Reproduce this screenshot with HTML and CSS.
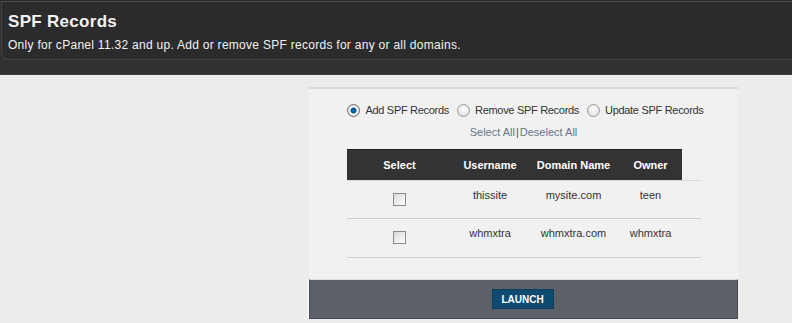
FILE: index.html
```html
<!DOCTYPE html>
<html lang="en">

<head>
  <meta charset="UTF-8" />
  <title>SPF Records</title>
  <link rel="stylesheet" href="styles.css">
</head>

<body>
  <div class="masthead">
    <div class="masthead-box">
      <h1>SPF Records</h1>
      <p>Only for cPanel 11.32 and up. Add or remove SPF records for any or all domains.</p>
    </div>
    <div class="masthead-strip"></div>
  </div>

  <div class="panel">
    <form id="spf-form">
      <div class="modes">
        <label><input type="radio" name="mode" value="add" checked /> Add SPF Records</label>
        <label><input type="radio" name="mode" value="remove" /> Remove SPF Records</label>
        <label><input type="radio" name="mode" value="update" /> Update SPF Records</label>
      </div>

      <div class="select-links">
        <a href="#" id="select-all">Select All</a><span class="sep">|</span><a href="#" id="deselect-all">Deselect All</a>
      </div>

      <table class="accounts">
        <thead>
          <tr>
            <th class="col-select">Select</th>
            <th class="col-user">Username</th>
            <th class="col-domain">Domain Name</th>
            <th class="col-owner">Owner</th>
            <th class="col-pad"></th>
          </tr>
        </thead>
        <tbody>
          <tr>
            <td><input type="checkbox" name="acct" value="thissite" /></td>
            <td>thissite</td>
            <td>mysite.com</td>
            <td>teen</td>
            <td></td>
          </tr>
          <tr>
            <td><input type="checkbox" name="acct" value="whmxtra" /></td>
            <td>whmxtra</td>
            <td>whmxtra.com</td>
            <td>whmxtra</td>
            <td></td>
          </tr>
        </tbody>
      </table>

      <div class="panel-footer">
        <button type="submit">LAUNCH</button>
      </div>
    </form>
  </div>
</body>

</html>
```

FILE: styles.css
```css
html,
body {
  margin: 0;
  padding: 0;
}

body {
  font-family: "Liberation Sans", Arial, sans-serif;
  background-color: #ececec;
  color: #333;
}

/* header */
.masthead {
  background: #313131;
  border-top: 1px solid #262626;
}

.masthead-box {
  background: #2b2b2b;
  border-top: 1px solid #4e4e4e;
  border-left: 1px solid #404040;
  border-bottom: 1px solid #444;
  border-radius: 0 0 0 8px;
  margin-left: 1px;
  height: 59px;
  padding: 0 6px;
  box-sizing: border-box;
  color: #f2f2f2;
}

.masthead-box h1 {
  margin: 0;
  padding-top: 10px;
  font-size: 17px;
  line-height: 20px;
  font-weight: bold;
  letter-spacing: 0.3px;
}

.masthead-box p {
  margin: 6px 0 0;
  font-size: 12px;
  line-height: 14px;
  letter-spacing: 0.28px;
}

.masthead-strip {
  height: 14px;
  border-bottom: 1px solid #3e3e3e;
}

/* main panel */
.panel {
  margin: 12px 0 0 309px;
  width: 429px;
  background: #f1f1f1;
  border-top: 2px solid #dadada;
}

.modes {
  display: flex;
  justify-content: center;
  gap: 8px;
  padding-top: 13px;
  padding-left: 4px;
  font-size: 11px;
  line-height: 16px;
  letter-spacing: -0.3px;
  color: #333;
}

.modes label {
  display: flex;
  align-items: center;
  gap: 5px;
}

.modes input {
  appearance: none;
  width: 13px;
  height: 13px;
  margin: 0;
  border: 1px solid #9a9a9a;
  border-radius: 50%;
  background: radial-gradient(circle at 50% 40%, #ffffff, #d6d6d6);
  box-sizing: border-box;
}

.modes input:checked {
  border-color: #6a6a6a;
  background: radial-gradient(circle, #0d77c2 0, #0a4f86 2.5px, #ffffff 3.5px, #d0d0d0 6px);
}

.select-links {
  text-align: center;
  font-size: 11px;
  line-height: 16px;
  margin-top: 6px;
  color: #555;
}

.select-links a {
  color: #66768a;
  text-decoration: none;
}

.select-links .sep {
  margin: 0 1px;
}

.accounts {
  margin: 9px auto 0;
  width: 354px;
  border-collapse: collapse;
  font-size: 11px;
  table-layout: fixed;
}

.accounts th {
  background: #333;
  color: #fff;
  font-weight: bold;
  height: 30px;
  padding: 0;
  text-align: center;
  border-top: 1px solid #222;
}

.accounts th.col-pad {
  background: transparent;
  border-top: none;
}

.col-select { width: 106px; }
.col-user { width: 75px; }
.col-domain { width: 92px; }
.col-owner { width: 62px; }
.col-pad { width: 19px; }

.accounts td {
  height: 39px;
  padding: 8px 0 0;
  vertical-align: top;
  text-align: center;
  color: #333;
  border-bottom: 1px solid #cfcfcf;
  box-sizing: border-box;
}

.accounts tbody tr:first-child td {
  height: 38px;
  border-top: 1px solid #d6d6d6;
}

.accounts input[type="checkbox"] {
  appearance: none;
  width: 13px;
  height: 13px;
  margin: 4px 0 0;
  border: 1px solid #8c8c8c;
  background: linear-gradient(135deg, #d8d8d8, #ffffff);
  box-sizing: border-box;
}

.accounts input[type="checkbox"]:checked {
  background: #0d5a8f;
}

.panel-footer {
  margin-top: 21px;
  height: 40px;
  background: #5b6166;
  border: 1px solid #454b50;
  border-top: 1px solid #dedede;
  box-shadow: -1px 0 0 #fff;
  display: flex;
  justify-content: center;
  align-items: flex-start;
  box-sizing: border-box;
  padding-top: 9px;
  padding-right: 2px;
}

.panel-footer button {
  background: #0f4a70;
  color: #fff;
  border: 1px solid #0b3d5e;
  width: 62px;
  height: 20px;
  padding: 0;
  font-family: "Liberation Sans", Arial, sans-serif;
  font-size: 10px;
  font-weight: bold;
  cursor: pointer;
}
```
